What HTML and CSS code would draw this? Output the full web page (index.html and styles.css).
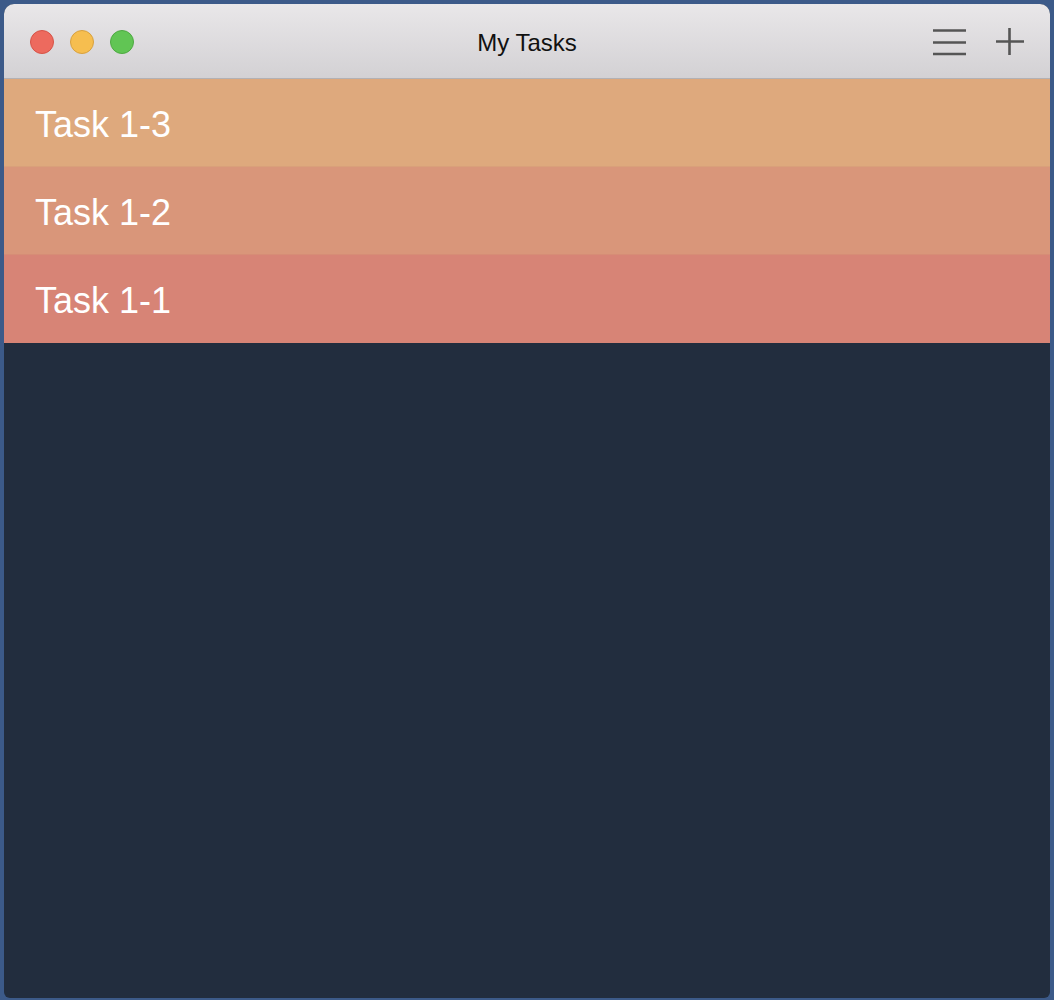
FILE: index.html
```html
<!DOCTYPE html>
<html>
<head>
<meta charset="utf-8">
<link rel="stylesheet" href="styles.css">
</head>
<body>
<div class="window">
  <header class="titlebar">
    <div class="lights">
      <span class="light red"></span>
      <span class="light yellow"></span>
      <span class="light green"></span>
    </div>
    <div class="title">My Tasks</div>
    <div class="actions">
      <svg class="icon-menu" width="36" height="30" viewBox="0 0 36 30">
        <path d="M1 3.5H34M1 15.5H34M1 27H34" stroke="#555" stroke-width="2.6" fill="none"/>
      </svg>
      <svg class="icon-plus" width="30" height="30" viewBox="0 0 30 30">
        <path d="M1 14.5H29M14.5 1V28" stroke="#555" stroke-width="2.6" fill="none"/>
      </svg>
    </div>
  </header>
  <div class="tasks">
    <div class="task t3">Task 1-3</div>
    <div class="task t2">Task 1-2</div>
    <div class="task t1">Task 1-1</div>
  </div>
</div>
</body>
</html>
```
FILE: styles.css
```css
html, body {
  margin: 0;
  padding: 0;
  height: 100%;
}
body {
  background: #3c5a89;
  padding: 4px 4px 2px 4px;
  box-sizing: border-box;
  font-family: "Helvetica Neue", "Liberation Sans", "Noto Sans", Arial, sans-serif;
}
.window {
  height: 994px;
  background: #222d3e;
  border-radius: 10px 10px 6px 6px;
  overflow: hidden;
  display: flex;
  flex-direction: column;
}
.titlebar {
  height: 74px;
  flex: none;
  background: linear-gradient(#e9e7e9, #d3d1d4);
  border-bottom: 1px solid #b3b1b4;
  display: flex;
  align-items: center;
  position: relative;
}
.lights {
  display: flex;
  gap: 16px;
  padding-left: 26px;
  margin-top: 2px;
}
.light {
  width: 24px;
  height: 24px;
  border-radius: 50%;
  box-sizing: border-box;
}
.red { background: #ed6a5e; border: 1px solid #d65347; }
.yellow { background: #f6be4f; border: 1px solid #d8a13f; }
.green { background: #61c554; border: 1px solid #4ea942; }
.title {
  position: absolute;
  left: 0;
  right: 0;
  top: 0;
  bottom: 0;
  display: flex;
  align-items: center;
  justify-content: center;
  font-size: 24px;
  color: #111;
  margin-top: 3px;
  pointer-events: none;
}
.actions {
  margin-left: auto;
  display: flex;
  align-items: center;
  gap: 27px;
  padding-right: 25px;
  margin-top: 2px;
}
.icon-menu, .icon-plus { display: block; }
.tasks {
  display: flex;
  flex-direction: column;
}
.task {
  height: 88px;
  display: flex;
  align-items: center;
  padding-left: 31px;
  padding-top: 4px;
  color: #fff;
  font-size: 36px;
  box-sizing: border-box;
}
.t3 { background: #dea97d; border-bottom: 1px solid #d9a07a; }
.t2 { background: #d9967a; border-bottom: 1px solid #d68d76; }
.t1 { background: #d78476; }
```
